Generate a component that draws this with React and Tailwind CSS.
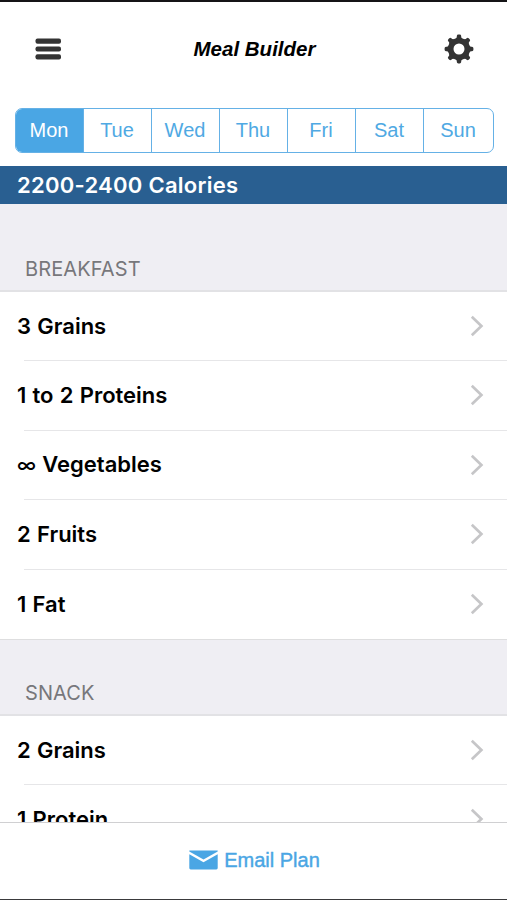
import React, { useState } from 'react';
import clsx from 'clsx';

const days = [
  { label: 'Mon', width: 'w-[67px]' },
  { label: 'Tue', width: 'w-[68px]' },
  { label: 'Wed', width: 'w-[68px]' },
  { label: 'Thu', width: 'w-[68px]' },
  { label: 'Fri', width: 'w-[68px]' },
  { label: 'Sat', width: 'w-[68px]' },
  { label: 'Sun', width: 'flex-1' },
];

const breakfast = [
  { amount: '3', name: 'Grains' },
  { amount: '1 to 2', name: 'Proteins' },
  { amount: '∞', name: 'Vegetables' },
  { amount: '2', name: 'Fruits' },
  { amount: '1', name: 'Fat' },
];

const snack = [
  { amount: '2', name: 'Grains' },
  { amount: '1', name: 'Protein' },
];

const teeth = [0, 45, 90, 135, 180, 225, 270, 315];

const MenuIcon = () => (
  <svg className="w-[26px] h-[22px]" viewBox="0 0 26 22" fill="#333333">
    <rect x="0.5" y="0.5" width="25.5" height="5.2" rx="2" />
    <rect x="0.5" y="8.4" width="25.5" height="5.2" rx="2" />
    <rect x="0.5" y="16.3" width="25.5" height="5.2" rx="2" />
  </svg>
);

const GearIcon = () => (
  <svg className="w-[30px] h-[30px]" viewBox="-15 -15 30 30" fill="#333333">
    <circle r="8.3" fill="none" stroke="#333333" strokeWidth="5.6" />
    {teeth.map((angle) => (
      <path
        key={angle}
        transform={`rotate(${angle})`}
        d="M-3.8 -9.8 L-2.2 -11.8 V-13 Q-2 -14.4 -0.7 -14.4 H0.7 Q2 -14.4 2.2 -13 V-11.8 L3.8 -9.8 Z"
      />
    ))}
  </svg>
);

const MailIcon = () => (
  <svg className="w-[29px] h-[20px]" viewBox="0 0 29 20" fill="#4aa6e4">
    <path d="M0.3 0.5 H28.7 V1.6 L14.5 9.6 L0.3 1.6 Z" />
    <path d="M0.3 4.3 L14.5 12.3 L28.7 4.3 V18 Q28.7 19.4 27.3 19.4 H1.7 Q0.3 19.4 0.3 18 Z" />
  </svg>
);

const Chevron = () => (
  <svg className="w-[14px] h-[22px]" viewBox="0 0 14 22" fill="none" stroke="#c6c6c8" strokeWidth="2.7">
    <path d="M1.8 1.8 L11.4 11 L1.8 20.2" />
  </svg>
);

const SectionHeader = ({ title, className }) => (
  <div className={clsx('flex items-end border-b-2 border-[#e2e2e5] bg-[#efeef3] pl-[25px]', className)}>
    <h2 className="text-[20px] leading-6 tracking-[0.1px] text-[#77777b]">{title}</h2>
  </div>
);

const MealRow = ({ amount, name, isLast }) => (
  <li className="relative flex h-[69.4px] items-center justify-between pb-[1.5px] pl-[17px] pr-[23px]">
    <span className="text-[22px] font-semibold leading-7 text-black [word-spacing:0.7px]">
      <span className={clsx(amount === '∞' && 'text-[20px] font-medium')}>{amount}</span> {name}
    </span>
    <Chevron />
    {!isLast && <div className="absolute bottom-0 left-6 right-0 h-px bg-[#e6e6e8]" />}
  </li>
);

const App = () => {
  const [selected, setSelected] = useState('Mon');

  return (
    <div className="flex h-[900px] w-[507px] flex-col overflow-hidden border-b border-t-2 border-b-[#3a3a3c] border-t-[#151416] bg-white font-['Inter',sans-serif]">
      <header className="flex h-[106px] shrink-0 items-start justify-between pl-[35px] pr-[33px] pt-8">
        <button className="flex h-[30px] items-center"><MenuIcon /></button>
        <h1 className="pl-1 font-['Liberation_Sans',sans-serif] text-[20.5px] font-bold italic leading-[30px] text-black">Meal Builder</h1>
        <button className="flex h-[30px] items-center"><GearIcon /></button>
      </header>

      <div className="ml-[15px] flex h-[45px] w-[479px] shrink-0 overflow-hidden rounded-[7px] border-[1.5px] border-[#65b1e6]">
        {days.map((day, index) => (
          <button
            key={day.label}
            onClick={() => setSelected(day.label)}
            className={clsx(
              "shrink-0 pr-px font-['Liberation_Sans',sans-serif] text-[20px] leading-[41px]",
              day.width,
              index > 0 && 'border-l-[1.5px] border-[#65b1e6]',
              selected === day.label ? 'bg-[#4aa6e4] text-white' : 'text-[#4fa9e3]'
            )}
          >
            {day.label}
          </button>
        ))}
      </div>

      <div className="mt-[13px] flex h-[38px] shrink-0 items-center bg-[#295f91] pl-[17px]">
        <p className="text-[22px] font-semibold leading-7 tracking-[0.27px] text-white">2200-2400 Calories</p>
      </div>

      <main className="min-h-0 flex-1 overflow-hidden">
        <SectionHeader title="BREAKFAST" className="h-[88px] pb-[9px]" />
        <ul>
          {breakfast.map((item, index) => (
            <MealRow key={item.name} {...item} isLast={index === breakfast.length - 1} />
          ))}
        </ul>
        <SectionHeader title="SNACK" className="h-[77px] border-t border-t-[#dededf] pb-[9px]" />
        <ul>
          {snack.map((item) => (
            <MealRow key={item.name} {...item} />
          ))}
        </ul>
      </main>

      <footer className="flex h-[77px] shrink-0 items-center justify-center border-t-[1.5px] border-[#d0d0d2] pb-[2px] pl-[2px]">
        <button className="flex items-center gap-[6px] text-[#4aa6e4]">
          <MailIcon />
          <span className="font-['Liberation_Sans',sans-serif] text-[20px] leading-6 [-webkit-text-stroke:0.4px_#4aa6e4]">Email Plan</span>
        </button>
      </footer>
    </div>
  );
};

export default App;
